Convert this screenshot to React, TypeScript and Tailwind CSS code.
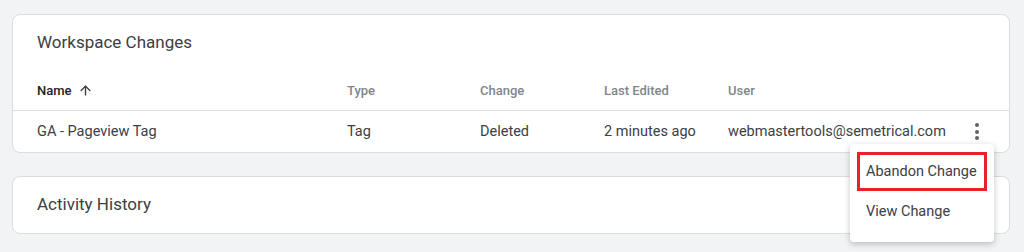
import { ArrowUp } from "lucide-react";

const columns = [
    { label: "Type", value: "Tag" },
    { label: "Change", value: "Deleted" },
    { label: "Last Edited", value: "2 minutes ago" },
    { label: "User", value: "webmastertools@semetrical.com" },
];

function Kebab() {
    return (
        <button className="w-6 h-6 flex flex-col items-center justify-center gap-[2.5px]">
            <span className="w-[4px] h-[4px] rounded-full bg-[#5f6368]" />
            <span className="w-[4px] h-[4px] rounded-full bg-[#5f6368]" />
            <span className="w-[4px] h-[4px] rounded-full bg-[#5f6368]" />
        </button>
    );
}

export default function App() {
    return (
        <div
            className="w-[1024px] h-[252px] bg-[#f1f3f4] pt-[14px] px-[12px] overflow-hidden"
            style={{ fontFamily: "Roboto, 'Liberation Sans', sans-serif" }}
        >
            {/* Workspace changes card */}
            <div className="relative w-[998px] bg-white border border-[#dadce0] rounded-lg">
                <div className="h-[56px] pl-6 flex items-center text-[17px] text-[#3c4043]">
                    Workspace Changes
                </div>

                <div className="grid grid-cols-[310px_133px_124px_124px_1fr_44px] items-center h-10 border-b border-[#e0e0e0] pl-6 text-[13px] font-medium text-[#80868b]">
                    <div className="flex items-center gap-[6px] text-[#202124]">
                        Name
                        <ArrowUp size={15} strokeWidth={2.25} className="text-[#3c4043]" />
                    </div>
                    {columns.map((col) => (
                        <div key={col.label}>{col.label}</div>
                    ))}
                    <div />
                </div>

                <div className="grid grid-cols-[310px_133px_124px_124px_1fr_44px] items-center h-[41px] pl-6 text-[14.5px] text-[#3c4043]">
                    <div>GA - Pageview Tag</div>
                    {columns.map((col) => (
                        <div key={col.label}>{col.value}</div>
                    ))}
                    <div className="flex justify-start">
                        <Kebab />
                    </div>
                </div>

                {/* Row menu */}
                <div className="absolute top-[129px] right-[15px] w-[144px] bg-white rounded shadow-[0_2px_6px_rgba(60,64,67,0.3)] pt-2 pb-[9px] px-[7px] z-10 text-[14.5px] text-[#3c4043]">
                    <div className="h-[39px] border-[3px] border-[#e8202a] pl-[6px] flex items-center">
                        Abandon Change
                    </div>
                    <div className="h-[42px] pl-[9px] flex items-center">View Change</div>
                </div>
            </div>

            {/* Activity history card */}
            <div className="w-[998px] h-[58px] mt-[23px] bg-white border border-[#dadce0] rounded-lg pl-6 flex items-center text-[17px] text-[#3c4043]">
                Activity History
            </div>
        </div>
    );
}
